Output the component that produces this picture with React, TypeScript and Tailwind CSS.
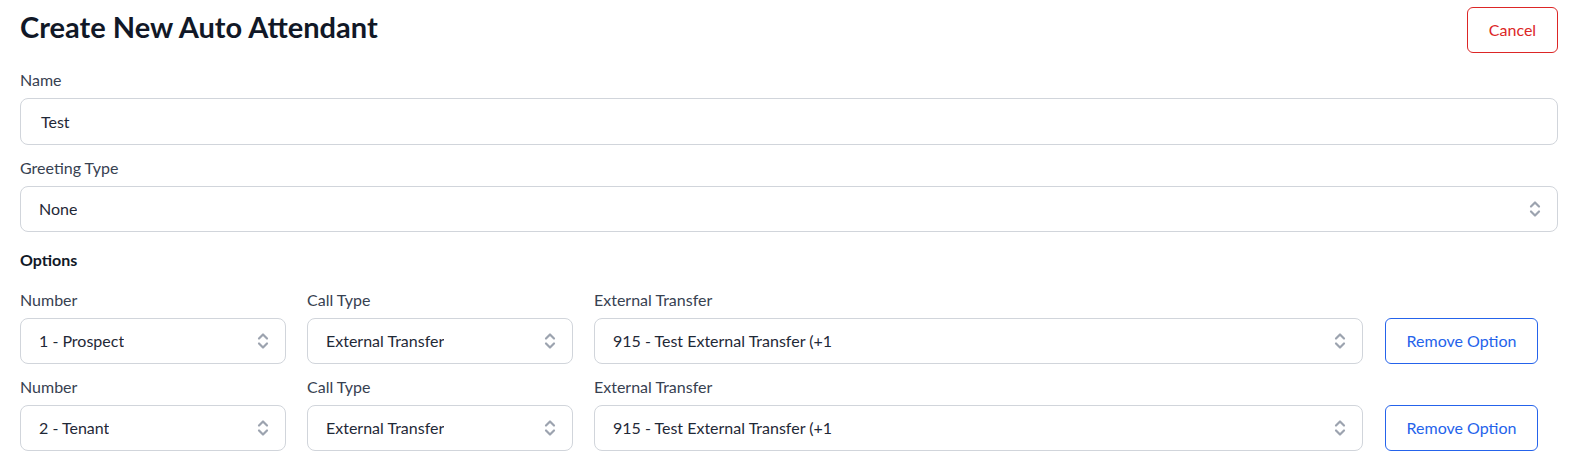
import { ReactNode } from "react"

function Chevrons() {
  return (
    <svg
      width="12"
      height="18"
      viewBox="0 0 12 18"
      fill="none"
      stroke="#9ca3af"
      strokeWidth="2.2"
      strokeLinecap="round"
      strokeLinejoin="round"
      className="shrink-0"
    >
      <polyline points="2 6.5 6 2.5 10 6.5" />
      <polyline points="2 11.5 6 15.5 10 11.5" />
    </svg>
  )
}

function Label({ children }: { children: ReactNode }) {
  return <div className="mb-1.5 text-base leading-6 text-[#374151]">{children}</div>
}

function Select({ value, className = "" }: { value: string; className?: string }) {
  return (
    <div
      className={`flex h-[46px] items-center justify-between rounded-lg border border-[#d1d5db] bg-white pr-4 pl-[18px] text-base text-[#1f2937] ${className}`}
    >
      <span className="truncate">{value}</span>
      <Chevrons />
    </div>
  )
}

const options = [
  { number: "1 - Prospect", callType: "External Transfer", target: "915 - Test External Transfer (+1" },
  { number: "2 - Tenant", callType: "External Transfer", target: "915 - Test External Transfer (+1" },
]

export default function App() {
  return (
    <main
      className="min-h-screen bg-white pt-[9px] pr-[18px] pl-5"
      style={{ fontFamily: "Lato, 'Liberation Sans', sans-serif" }}
    >
      {/* Header */}
      <div className="flex items-start justify-between">
        <h1 className="text-[29px] leading-9 font-bold text-[#111827]">Create New Auto Attendant</h1>
        <button className="-mt-0.5 h-[46px] w-[91px] rounded-md border border-[#dc2626] text-base text-[#dc2626]">
          Cancel
        </button>
      </div>

      <div className="mt-[15px]">
        <Label>Name</Label>
        <div className="flex h-[47px] items-center rounded-lg border border-[#d1d5db] pl-5 text-base text-[#1f2937]">
          Test
        </div>
      </div>

      <div className="mt-[11px]">
        <Label>Greeting Type</Label>
        <Select value="None" />
      </div>

      <div className="mt-4 text-base leading-6 font-bold text-[#111827]">Options</div>

      <div className="mt-4 flex flex-col gap-[11px]">
        {options.map((o) => (
          <div key={o.number} className="flex items-end gap-[21px]">
            <div className="w-[266px]">
              <Label>Number</Label>
              <Select value={o.number} />
            </div>
            <div className="w-[266px]">
              <Label>Call Type</Label>
              <Select value={o.callType} />
            </div>
            <div className="w-[769px]">
              <Label>External Transfer</Label>
              <Select value={o.target} />
            </div>
            <button className="ml-px h-[46px] w-[153px] rounded-md border border-[#2563eb] text-base text-[#2563eb]">
              Remove Option
            </button>
          </div>
        ))}
      </div>
    </main>
  )
}
